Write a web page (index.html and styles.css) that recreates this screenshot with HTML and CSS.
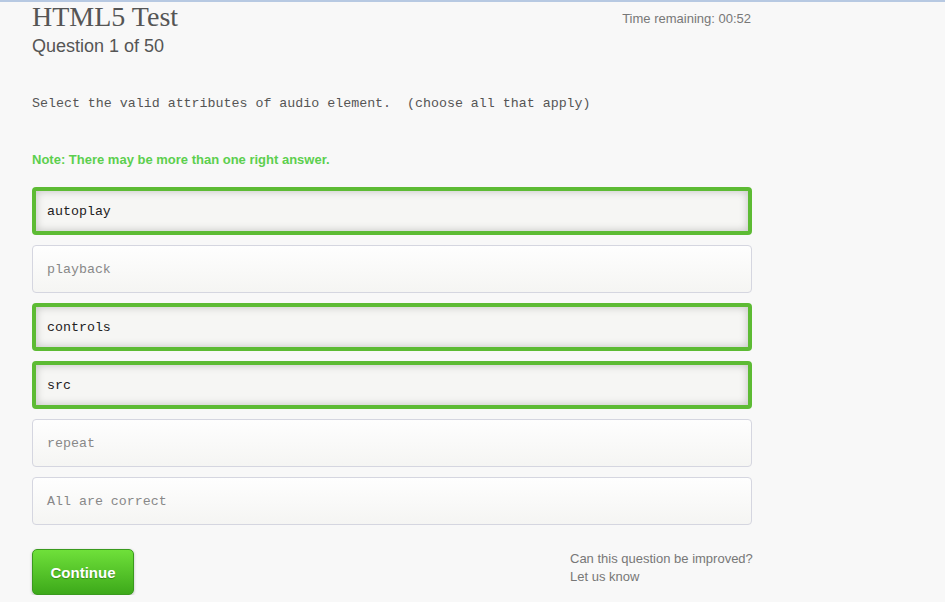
FILE: index.html
```html
<!DOCTYPE html>
<html lang="en">
<head>
  <link rel="stylesheet" href="styles.css">
</head>
<body>
  <div class="page">
    <div class="header">
      <div>
        <h1 class="title">HTML5 Test</h1>
        <div class="counter">Question 1 of 50</div>
      </div>
      <div class="timer">Time remaining: 00:52</div>
    </div>

    <p class="question">Select the valid attributes of audio element.&nbsp; (choose all that apply)</p>

    <p class="note">Note: There may be more than one right answer.</p>

    <div class="options">
      <div class="option selected">autoplay</div>
      <div class="option">playback</div>
      <div class="option selected">controls</div>
      <div class="option selected">src</div>
      <div class="option">repeat</div>
      <div class="option">All are correct</div>
    </div>

    <div class="footer">
      <button class="button">Continue</button>
      <div class="feedback">
        Can this question be improved?<br>
        Let us know
      </div>
    </div>
  </div>
</body>
</html>
```

FILE: styles.css
```css
html {
  background-color: #f8f8f8;
}
body {
  margin: 0;
  border-top: 2px solid #b7c9e2;
  font-family: "Liberation Sans", Arial, sans-serif;
  color: #555;
}
.page {
  width: 720px;
  padding-left: 32px;
}
.header {
  display: flex;
  justify-content: space-between;
  align-items: flex-start;
}
.title {
  margin: 0;
  font-family: "Liberation Serif", "Times New Roman", serif;
  font-weight: normal;
  font-size: 28px;
  line-height: 30px;
  color: #555;
}
.counter {
  font-size: 18px;
  line-height: 24px;
  margin-top: 2px;
  color: #555;
}
.timer {
  font-size: 13px;
  color: #777;
  margin-top: 9px;
  margin-right: 1px;
}
.question {
  margin: 38px 0 0;
  font-family: "Liberation Mono", "Courier New", monospace;
  font-size: 13.3px;
  line-height: 16px;
  color: #555;
  white-space: pre;
}
.note {
  margin: 40px 0 0;
  font-size: 13px;
  font-weight: bold;
  line-height: 16px;
  color: #5ccf4e;
}
.options {
  display: flex;
  flex-direction: column;
  gap: 10px;
  margin-top: 19px;
}
.option {
  height: 46px;
  display: flex;
  align-items: center;
  padding-left: 14px;
  border: 1px solid #d5d6e0;
  border-radius: 4px;
  background: linear-gradient(#fefefe, #f5f5f3);
  font-family: "Liberation Mono", "Courier New", monospace;
  font-size: 13.3px;
  color: #888;
}
.option.selected {
  height: 40px;
  padding-left: 11px;
  border: 4px solid #5dbb34;
  background: #f6f6f4;
  box-shadow: inset 0 0 8px rgba(0, 0, 0, 0.22);
  color: #222;
}
.footer {
  display: flex;
  justify-content: space-between;
  align-items: flex-start;
  margin-top: 24px;
}
.button {
  width: 102px;
  height: 46px;
  border: 1px solid #3a9a1e;
  border-radius: 5px;
  background: linear-gradient(#6fe03a, #3da91a);
  box-shadow: 0 1px 3px rgba(0, 0, 0, 0.25);
  color: #fff;
  font-family: "Liberation Sans", Arial, sans-serif;
  font-size: 15px;
  font-weight: bold;
  text-shadow: 0 1px 1px rgba(0, 0, 0, 0.3);
  cursor: pointer;
}
.feedback {
  width: 182px;
  margin-top: 1px;
  font-size: 13px;
  line-height: 18px;
  white-space: nowrap;
  color: #777;
}
```
